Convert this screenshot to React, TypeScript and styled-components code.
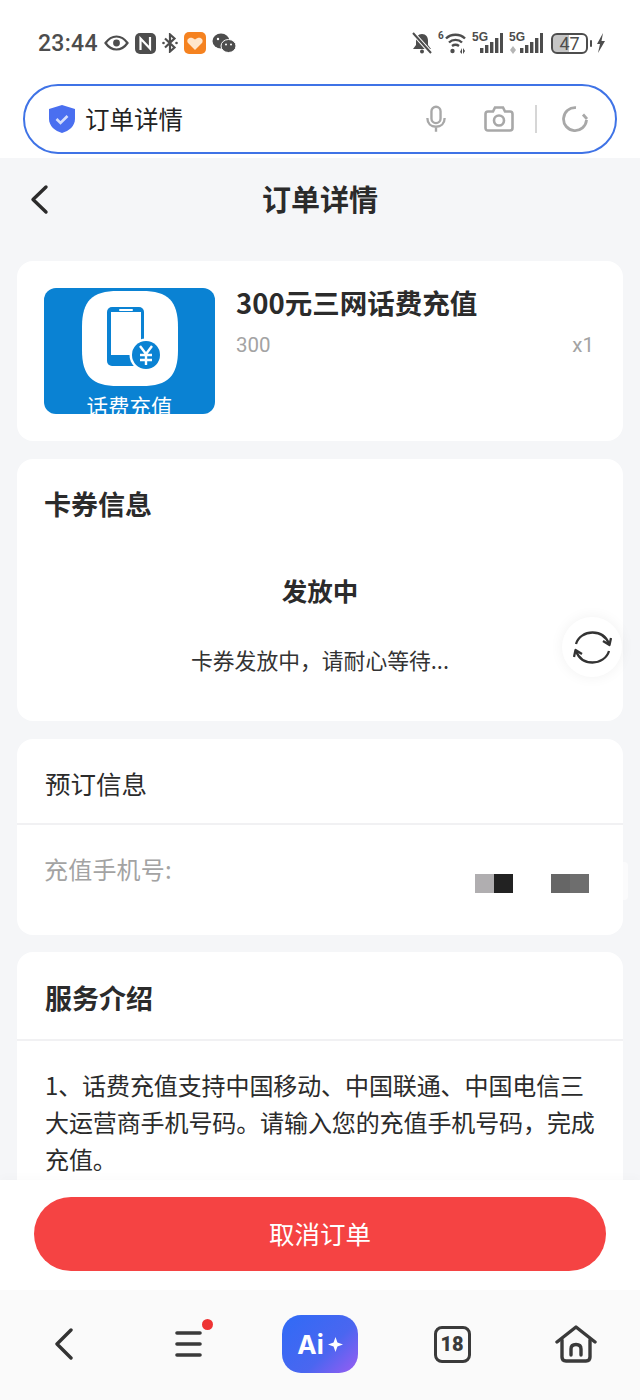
import React from 'react';
import styled, { createGlobalStyle } from 'styled-components';

const GlobalStyle = createGlobalStyle`
  html, body {
    margin: 0;
    padding: 0;
    background: #f5f6f8;
    font-family: "Noto Sans CJK SC", "Noto Sans", sans-serif;
  }
`;

const Page = styled.div`
  width: 640px;
  height: 1400px;
  display: flex;
  flex-direction: column;
  overflow: hidden;
  background: #f5f6f8;
`;

const Top = styled.div`
  height: 158px;
  flex: none;
  background: #fff;
  padding: 0 23px;
  box-sizing: border-box;
`;

const StatusBar = styled.div`
  height: 84px;
  display: flex;
  align-items: center;
  justify-content: space-between;
  padding: 2px 11px 0 15px;
  box-sizing: border-box;
  color: #4d4d4d;
`;

const StatusGroup = styled.div<{ $gap: number }>`
  display: flex;
  align-items: center;
  gap: ${p => p.$gap}px;
`;

const Clock = styled.span`
  font-family: Roboto, sans-serif;
  font-size: 23px;
  font-weight: 500;
  letter-spacing: 0.3px;
`;

const BatteryBox = styled.div`
  width: 33px;
  height: 17px;
  border: 2px solid #4d4d4d;
  border-radius: 6px;
  background: linear-gradient(90deg, #c6c6c6 50%, #fff 50%);
  font-family: Roboto, sans-serif;
  font-size: 18px;
  line-height: 17px;
  text-align: center;
  position: relative;
  margin: 0 2px;

  &::after {
    content: '';
    position: absolute;
    right: -6px;
    top: 5px;
    width: 2px;
    height: 7px;
    border-radius: 1px;
    background: #4d4d4d;
  }
`;

const WifiBox = styled.div`
  position: relative;
  width: 28px;
  height: 22px;
  display: flex;
  justify-content: flex-end;
`;

const WifiBand = styled.span`
  font-family: Roboto, sans-serif;
  font-size: 10px;
  font-weight: 700;
  line-height: 10px;
  position: absolute;
  left: 0;
  top: -1px;
`;

const AddressBar = styled.div`
  height: 70px;
  border: 2px solid #3f73e6;
  border-radius: 36px;
  box-sizing: border-box;
  display: flex;
  align-items: center;
  padding: 0 26px 0 23px;
`;

const AddressText = styled.div`
  flex: 1;
  margin-left: 9px;
  padding-bottom: 2px;
  font-size: 24.5px;
  color: #222;
`;

const AddressDivider = styled.div`
  width: 2px;
  height: 28px;
  background: #d6d6d6;
  margin: 0 24px 0 21px;
`;

const MicSlot = styled.div`
  margin-right: 38px;
  display: flex;
`;

const TitleRow = styled.div`
  height: 82px;
  flex: none;
  display: flex;
  align-items: center;
  justify-content: center;
  position: relative;
`;

const BackButton = styled.div`
  position: absolute;
  left: 28px;
  top: 25px;
  display: flex;
`;

const Title = styled.div`
  font-size: 29px;
  font-weight: 600;
  color: #2b2b2b;
  padding-bottom: 2px;
`;

const Content = styled.div`
  flex: 1;
  min-height: 0;
  overflow: hidden;
  padding: 21px 17px 0;
  display: flex;
  flex-direction: column;
  gap: 18px;
  position: relative;
`;

const Card = styled.div<{ $height?: number }>`
  background: #fff;
  border-radius: 16px;
  flex: none;
  position: relative;
  ${p => (p.$height ? `height: ${p.$height}px;` : '')}
`;

const ProductCard = styled(Card)`
  display: flex;
  padding: 27px 29px 0 27px;
  box-sizing: border-box;
`;

const Thumb = styled.div`
  width: 171px;
  height: 126px;
  border-radius: 12px;
  background: #0a82d3;
  overflow: hidden;
  flex: none;
  display: flex;
  flex-direction: column;
  align-items: center;
  padding-top: 3px;
  box-sizing: border-box;
`;

const ThumbArt = styled.svg`
  flex: none;
`;

const ThumbLabel = styled.div`
  flex: none;
  color: #fff;
  font-size: 21.5px;
  line-height: 24px;
  margin-top: 8px;
  white-space: nowrap;
`;

const ProductInfo = styled.div`
  flex: 1;
  margin-left: 21px;
`;

const ProductName = styled.div`
  font-size: 27.5px;
  font-weight: 600;
  line-height: 28px;
  color: #2b2b2b;
`;

const ProductMeta = styled.div`
  display: flex;
  justify-content: space-between;
  margin-top: 15px;
  font-family: Roboto, sans-serif;
  font-size: 20.5px;
  line-height: 28px;
  color: #a3a3a3;
`;

const CardTitle = styled.div<{ $plain?: boolean }>`
  font-size: ${p => (p.$plain ? 25.5 : 27)}px;
  font-weight: ${p => (p.$plain ? 400 : 600)};
  color: #2b2b2b;
  line-height: 36px;
`;

const CouponCard = styled(Card)`
  padding: 27px 27px 0;
  box-sizing: border-box;
`;

const CouponStatus = styled.div`
  margin-top: 50px;
  text-align: center;
  font-size: 25.5px;
  font-weight: 600;
  line-height: 36px;
  color: #2b2b2b;
`;

const CouponHint = styled.div`
  margin-top: 37px;
  text-align: center;
  font-size: 21.8px;
  line-height: 30px;
  color: #333;
`;

const CardHeader = styled.div<{ $height: number; $offset: number }>`
  height: ${p => p.$height}px;
  box-sizing: border-box;
  display: flex;
  align-items: center;
  padding: ${p => p.$offset}px 28px 0;
  border-bottom: 2px solid #f1f1f3;
`;

const PhoneRow = styled.div`
  display: flex;
  justify-content: space-between;
  padding: 27px 34px 0 27px;
`;

const PhoneLabel = styled.div`
  font-size: 24px;
  line-height: 34px;
  letter-spacing: 0.2px;
  color: #a3a3a3;
`;

const EdgeTab = styled.div`
  position: absolute;
  right: -5px;
  top: 123px;
  width: 5px;
  height: 38px;
  background: #fbfbfc;
  border-radius: 0 4px 4px 0;
`;

const Mosaic = styled.div`
  display: flex;
  margin-top: 22px;
  gap: 38px;
`;

const MosaicPair = styled.div`
  display: flex;
`;

const MosaicCell = styled.div<{ $tone: string }>`
  width: 19px;
  height: 19px;
  background: ${p => p.$tone};
`;

const ServiceCard = styled(Card)`
  margin-top: -1px;
`;

const ServiceText = styled.div`
  padding: 25px 20px 40px 28px;
  font-size: 24px;
  line-height: 37px;
  letter-spacing: -0.1px;
  color: #2b2b2b;
`;

const FloatButton = styled.div`
  position: absolute;
  left: 562px;
  top: 377px;
  width: 60px;
  height: 60px;
  border-radius: 50%;
  background: #fff;
  box-shadow: 0 0 14px rgba(0, 0, 0, 0.06);
  display: flex;
  align-items: center;
  justify-content: center;
`;

const Footer = styled.div`
  height: 110px;
  flex: none;
  background: #fff;
  padding: 17px 34px 0;
  box-sizing: border-box;
  position: relative;
  box-shadow: 0 -4px 8px rgba(0, 0, 0, 0.015);
`;

const CancelButton = styled.div`
  height: 74px;
  border-radius: 37px;
  background: #f54343;
  color: #fff;
  font-size: 25.5px;
  padding-bottom: 4px;
  box-sizing: border-box;
  display: flex;
  align-items: center;
  justify-content: center;
`;

const BottomNav = styled.div`
  height: 110px;
  flex: none;
  background: #fafafa;
  display: grid;
  grid-template-columns: 128px 120px 144px 120px 128px;
  align-items: center;
  justify-items: center;
  padding-bottom: 2px;
  box-sizing: border-box;
`;

const NavItem = styled.div`
  display: flex;
  position: relative;
`;

const RedDot = styled.span`
  position: absolute;
  right: -11px;
  top: -11px;
  width: 11px;
  height: 11px;
  border-radius: 50%;
  background: #ee3333;
`;

const AiButton = styled.div`
  width: 76px;
  height: 58px;
  border-radius: 19px;
  background: linear-gradient(135deg, #2f6bf6 0%, #4a66f0 60%, #9a5cf2 100%);
  color: #fff;
  font-family: Inter, sans-serif;
  font-size: 26px;
  font-weight: 700;
  display: flex;
  align-items: center;
  justify-content: center;
  gap: 4px;
`;

const BadgeBox = styled.div`
  width: 31px;
  height: 31px;
  border: 3px solid #3a3a3a;
  border-radius: 8px;
  color: #3a3a3a;
  font-family: Roboto, sans-serif;
  font-size: 20px;
  font-weight: 900;
  display: flex;
  align-items: center;
  justify-content: center;
`;

const FiveG = styled.span`
  font-family: "Liberation Sans", sans-serif;
  font-size: 12px;
  font-weight: 700;
  line-height: 12px;
  position: absolute;
  left: 0;
  top: -1px;
`;

const SignalBox = styled.div<{ $width: number }>`
  position: relative;
  width: ${p => p.$width}px;
  height: 22px;
`;

const SignalIcon: React.FC<{ offset: number; arrows?: boolean }> = ({ offset, arrows }) => {
  const heights = [5, 8, 11, 15, 20];
  const width = offset + 23;
  return (
    <SignalBox $width={width}>
      <FiveG>5G</FiveG>
      <svg width={width} height="22" viewBox={`0 0 ${width} 22`} fill="#4d4d4d">
        {heights.map((h, i) => (
          <rect key={i} x={offset + i * 5} y={21 - h} width="3.4" height={h} />
        ))}
        {arrows && <path d="M1 18 4 14V22ZM7 18 4 22V14Z" fill="#b5b5b5" />}
      </svg>
    </SignalBox>
  );
};

const App: React.FC = () => {
  return (
    <Page>
      <GlobalStyle />
      <Top>
        <StatusBar>
          <StatusGroup $gap={6}>
            <Clock>23:44</Clock>
            <svg width="25" height="16" viewBox="0 0 25 16" fill="none" stroke="#4d4d4d" strokeWidth="2.2">
              <path d="M1.5 8C5 3 9 1.5 12.5 1.5S20 3 23.5 8C20 13 16 14.5 12.5 14.5S5 13 1.5 8Z" />
              <circle cx="12.5" cy="8" r="3.4" fill="#4d4d4d" stroke="none" />
            </svg>
            <svg width="21" height="21" viewBox="0 0 21 21">
              <rect width="21" height="21" rx="5" fill="#4d4d4d" />
              <path d="M5.5 17V5.5L15 15.5V4" fill="none" stroke="#fff" strokeWidth="2.2" />
            </svg>
            <svg width="16" height="20" viewBox="0 0 16 20" fill="none" stroke="#4d4d4d" strokeWidth="2.2">
              <path d="M3 5.5 12.5 14.5 8 18.5V1.5L12.5 5.5 3 14.5" />
              <circle cx="1.5" cy="10" r="1.3" fill="#4d4d4d" stroke="none" />
              <circle cx="14.5" cy="10" r="1.3" fill="#4d4d4d" stroke="none" />
            </svg>
            <svg width="22" height="22" viewBox="0 0 22 22">
              <rect width="22" height="22" rx="5" fill="#f58220" />
              <path d="M11 18 3.8 10.8C1.8 7 6.5 3.5 11 7.5 15.5 3.5 20.2 7 18.2 10.8Z" fill="#ffe6cc" />
            </svg>
            <svg width="24" height="20" viewBox="0 0 24 20" fill="#4d4d4d">
              <ellipse cx="9" cy="8" rx="8.5" ry="7.5" />
              <ellipse cx="16.5" cy="13" rx="7.5" ry="6.5" stroke="#fff" strokeWidth="1" />
              <circle cx="6" cy="6" r="1.2" fill="#fff" />
              <circle cx="14" cy="11.5" r="1" fill="#fff" />
              <circle cx="19" cy="11.5" r="1" fill="#fff" />
            </svg>
          </StatusGroup>
          <StatusGroup $gap={6}>
            <svg width="20" height="22" viewBox="0 0 20 22" fill="#4d4d4d">
              <path d="M10 2c4 0 6 3 6 7v4l3 4H1l3-4V9c0-4 2-7 6-7Z" />
              <circle cx="10" cy="19.5" r="2" />
              <path d="M1 1 19 21" stroke="#fff" strokeWidth="4" />
              <path d="M1 1 19 21" stroke="#4d4d4d" strokeWidth="2" />
            </svg>
            <WifiBox>
              <WifiBand>6</WifiBand>
              <svg width="21" height="22" viewBox="0 0 21 22" fill="none" stroke="#4d4d4d" strokeWidth="2.4">
                <path d="M1 6.5C6 1.5 15 1.5 20 6.5M4 10.5C7.5 7 13.5 7 17 10.5M7 14C9 12.6 12 12.6 14 14" />
                <circle cx="7.5" cy="19" r="2.2" fill="#4d4d4d" stroke="none" />
                <path d="M15 20 17 16V22ZM20 19 18 22V16Z" fill="#4d4d4d" stroke="none" />
              </svg>
            </WifiBox>
            <SignalIcon offset={8} />
            <SignalIcon offset={11} arrows />
            <BatteryBox>47</BatteryBox>
            <svg width="10" height="22" viewBox="0 0 10 22" fill="#4d4d4d">
              <path d="M7 1 1 12h3l-2 9 7-12H5.5Z" />
            </svg>
          </StatusGroup>
        </StatusBar>
        <AddressBar>
          <svg width="28" height="30" viewBox="0 0 28 30">
            <path d="M14 1 27 5V15C27 22 21 27 14 29 7 27 1 22 1 15V5Z" fill="#4a6ff0" />
            <path d="M8.5 15 12.5 19 19.5 12" fill="none" stroke="#d5defc" strokeWidth="2.6" />
          </svg>
          <AddressText>订单详情</AddressText>
          <MicSlot>
            <svg width="20" height="30" viewBox="0 0 22 30" fill="none" stroke="#a8a8a8" strokeWidth="2.6">
              <rect x="6" y="1.5" width="10" height="18" rx="5" />
              <path d="M1.5 14C1.5 20 5.5 23.5 11 23.5S20.5 20 20.5 14M11 23.5V29" />
            </svg>
          </MicSlot>
          <svg width="30" height="26" viewBox="0 0 30 26" fill="none" stroke="#a8a8a8" strokeWidth="2.6">
            <path d="M4 5.5H9L11 1.5H19L21 5.5H26C27.5 5.5 28.5 6.5 28.5 8V22C28.5 23.5 27.5 24.5 26 24.5H4C2.5 24.5 1.5 23.5 1.5 22V8C1.5 6.5 2.5 5.5 4 5.5Z" />
            <circle cx="15" cy="14.5" r="5" />
          </svg>
          <AddressDivider />
          <svg width="28" height="26" viewBox="0 0 28 26" fill="none" stroke="#a8a8a8" strokeWidth="2.8">
            <path d="M15 1.6A11.5 11.5 0 1 0 25.5 14" />
            <path d="M22 8.5 26 13" />
          </svg>
        </AddressBar>
      </Top>
      <TitleRow>
        <BackButton>
          <svg width="24" height="34" viewBox="0 0 24 34" fill="none" stroke="#2b2b2b" strokeWidth="3.4" strokeLinecap="round" strokeLinejoin="round">
            <path d="M18 4 5 16.5 18 29" />
          </svg>
        </BackButton>
        <Title>订单详情</Title>
      </TitleRow>
      <Content>
        <ProductCard $height={180}>
          <Thumb>
            <ThumbArt width="96" height="95" viewBox="0 0 96 95">
              <path d="M36 0H60C86 0 96 10 96 36V59C96 85 86 95 60 95H36C10 95 0 85 0 59V36C0 10 10 0 36 0Z" fill="#fff" />
              <rect x="25" y="16" width="37" height="59" rx="5" fill="#0a82d3" />
              <rect x="29" y="21" width="30" height="43" fill="#fff" />
              <rect x="37" y="18" width="14" height="2" rx="1" fill="#fff" />
              <circle cx="64" cy="64" r="16.5" fill="#fff" />
              <circle cx="64" cy="64" r="14" fill="#0a82d3" />
              <path d="M58 55 64 63 70 55M64 63V74M58 64H70M58 69H70" fill="none" stroke="#fff" strokeWidth="2.4" />
            </ThumbArt>
            <ThumbLabel>话费充值</ThumbLabel>
          </Thumb>
          <ProductInfo>
            <ProductName>300元三网话费充值</ProductName>
            <ProductMeta>
              <span>300</span>
              <span>x1</span>
            </ProductMeta>
          </ProductInfo>
        </ProductCard>
        <CouponCard $height={262}>
          <CardTitle>卡券信息</CardTitle>
          <CouponStatus>发放中</CouponStatus>
          <CouponHint>卡券发放中，请耐心等待...</CouponHint>
        </CouponCard>
        <Card $height={196}>
          <CardHeader $height={86} $offset={4}>
            <CardTitle $plain>预订信息</CardTitle>
          </CardHeader>
          <PhoneRow>
            <PhoneLabel>充值手机号:</PhoneLabel>
            <Mosaic>
              <MosaicPair>
                <MosaicCell $tone="#b0aeb0" />
                <MosaicCell $tone="#222" />
              </MosaicPair>
              <MosaicPair>
                <MosaicCell $tone="#666" />
                <MosaicCell $tone="#6e6e6e" />
              </MosaicPair>
            </Mosaic>
          </PhoneRow>
          <EdgeTab />
        </Card>
        <ServiceCard>
          <CardHeader $height={89} $offset={4}>
            <CardTitle>服务介绍</CardTitle>
          </CardHeader>
          <ServiceText>
            1、话费充值支持中国移动、中国联通、中国电信三大运营商手机号码。请输入您的充值手机号码，完成充值。
          </ServiceText>
        </ServiceCard>
        <FloatButton>
          <svg width="39" height="33" viewBox="0 0 39 33" fill="none" stroke="#333" strokeWidth="2.3" strokeLinejoin="round">
            <path d="M3 13C5 6 12 1.5 19.5 1.5S33 5 36 13" />
            <path d="M36 20C34 27 27 31.5 19.5 31.5S6 28 3 20" />
            <path d="M30 10 36.5 14 38 7" />
            <path d="M9 23 2.5 19 1 26" />
          </svg>
        </FloatButton>
      </Content>
      <Footer>
        <CancelButton>取消订单</CancelButton>
      </Footer>
      <BottomNav>
        <NavItem>
          <svg width="20" height="32" viewBox="0 0 20 32" fill="none" stroke="#333" strokeWidth="3.4" strokeLinecap="round" strokeLinejoin="round">
            <path d="M17 2 3 16 17 30" />
          </svg>
        </NavItem>
        <NavItem>
          <svg width="27" height="28" viewBox="0 0 27 28" fill="none" stroke="#3a3a3a" strokeWidth="3.6" strokeLinecap="round">
            <path d="M2 3H25M2 14H25M2 25H25" />
          </svg>
          <RedDot />
        </NavItem>
        <AiButton>
          <span>Ai</span>
          <svg width="15" height="15" viewBox="0 0 14 14" fill="#fff">
            <path d="M7 0 8.8 5.2 14 7 8.8 8.8 7 14 5.2 8.8 0 7 5.2 5.2Z" />
          </svg>
        </AiButton>
        <BadgeBox>18</BadgeBox>
        <NavItem>
          <svg width="42" height="38" viewBox="0 0 42 38" fill="none" stroke="#3a3a3a" strokeWidth="3.4" strokeLinecap="round" strokeLinejoin="round">
            <path d="M2 17 21 2 40 17" />
            <path d="M7 15V32C7 34.5 8.5 36 11 36H31C33.5 36 35 34.5 35 32V15" />
            <path d="M16 30V24C16 21 18 19.5 21 19.5S26 21 26 24V30" />
          </svg>
        </NavItem>
      </BottomNav>
    </Page>
  );
};

export default App;
